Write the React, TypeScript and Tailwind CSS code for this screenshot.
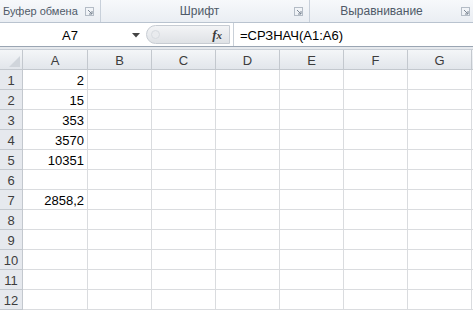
import React from "react";

const cols = ["A", "B", "C", "D", "E", "F", "G"];
const values: Record<number, string> = { 1: "2", 2: "15", 3: "353", 4: "3570", 5: "10351", 7: "2858,2" };

function Launcher() {
  return (
    <svg width="9" height="9" viewBox="0 0 9 9" className="shrink-0">
      <rect x="0.5" y="0.5" width="8" height="8" fill="none" stroke="#b4bcc6" />
      <path d="M3 3 L7 7 M7 4 V7 H4" stroke="#7d8794" fill="none" strokeWidth="1" />
    </svg>
  );
}

export default function App() {
  return (
    <div
      className="w-[473px] h-[310px] overflow-hidden bg-white"
      style={{ fontFamily: '"Liberation Sans", Arial, sans-serif' }}
    >
      {/* Ribbon group labels */}
      <div className="flex h-[23px] border-b border-[#b9c3cf] bg-gradient-to-b from-[#f7f9fb] to-[#eaeef3] text-[11px] text-[#4f5a68] whitespace-nowrap">
        <div className="w-[101px] flex items-center justify-between pl-[3px] pr-[6px] border-r border-[#c8d0da]">
          <span>Буфер обмена</span>
          <Launcher />
        </div>
        <div className="w-[209px] flex items-center border-r border-[#c8d0da]">
          <span className="flex-1 text-center pl-[4px] text-[12px]">Шрифт</span>
          <span className="pr-[6px] flex"><Launcher /></span>
        </div>
        <div className="flex-1 flex items-center">
          <span className="flex-1 text-center pr-[8px] text-[12px]">Выравнивание</span>
          <span className="pr-[3px] flex"><Launcher /></span>
        </div>
      </div>

      {/* Formula bar */}
      <div className="flex h-[24px] bg-white border-b border-[#9aa5b3] items-center text-[13px] text-black">
        <div className="w-[146px] flex items-center h-full pt-[2px]">
          <span className="flex-1 text-center pl-[8px]">A7</span>
          <svg width="8" height="5" viewBox="0 0 8 5" className="mr-[6px]">
            <path d="M0 0 H8 L4 4.5 Z" fill="#444" />
          </svg>
        </div>
        <div className="relative h-[19px] w-[84px] rounded-l-full bg-gradient-to-b from-[#f3f4f6] to-[#dfe2e6] border border-[#c7ccd3] flex items-center justify-end pr-[7px]">
          <div className="absolute left-[4px] top-[4px] w-[9px] h-[9px] rounded-full bg-[#e9ebee] border border-[#d7dbe0]" />
          <span
            className="italic font-bold text-[13px] text-[#3a3a3a]"
            style={{ fontFamily: '"Liberation Serif", "Times New Roman", serif' }}
          >
            f<span className="text-[11px]">x</span>
          </span>
        </div>
        <div className="h-full w-[1px] bg-[#c9d0d8] ml-[3px]" />
        <div className="flex-1 pl-[6px] pt-[2px]">=СРЗНАЧ(A1:A6)</div>
      </div>

      {/* gap */}
      <div className="h-[3px] bg-[#e6e9ed] border-b border-[#c8ced6]" />

      {/* Grid */}
      <div className="grid grid-cols-[23px_65px_64px_64px_64px_64px_64px_64px_10px] text-[13px]">
        <div className="h-[20px] border-r border-b border-[#c3c8ce] bg-gradient-to-b from-[#f4f6f8] to-[#e2e6eb] relative">
          <svg width="11" height="11" viewBox="0 0 11 11" className="absolute right-[2px] bottom-[2px]">
            <path d="M11 0 V11 H0 Z" fill="#d0d5db" />
          </svg>
        </div>
        {cols.map((c) => (
          <div
            key={c}
            className="h-[20px] border-r border-b border-[#c3c8ce] bg-gradient-to-b from-[#f4f6f8] to-[#e2e6eb] flex items-center justify-center pt-[2px] text-[#3d3d3d]"
          >
            {c}
          </div>
        ))}
        <div className="h-[20px] border-b border-[#c3c8ce] bg-gradient-to-b from-[#f4f6f8] to-[#e2e6eb]" />
        {Array.from({ length: 12 }, (_, i) => i + 1).map((r) => (
          <React.Fragment key={r}>
            <div className="h-[20px] border-r border-b border-[#c3c8ce] bg-[#e6e9ee] flex items-center justify-center pt-[2px] text-[#3d3d3d]">
              {r}
            </div>
            {cols.map((c) => (
              <div
                key={c}
                className="h-[20px] border-r border-b border-[#dadcdf] flex items-center justify-end pr-[3px] pt-[2px] text-black"
              >
                {c === "A" ? values[r] ?? "" : ""}
              </div>
            ))}
            <div className="h-[20px] border-b border-[#dadcdf]" />
          </React.Fragment>
        ))}
      </div>
    </div>
  );
}
